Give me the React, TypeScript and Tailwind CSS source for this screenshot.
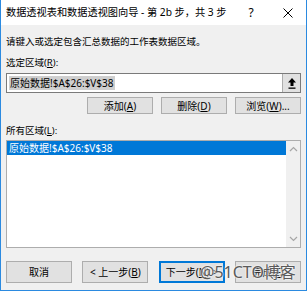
import type { ReactNode } from 'react'

const font = { fontFamily: '"Noto Sans", "Noto Sans CJK SC", sans-serif' }

function Btn({
  children,
  focused,
  className = '',
}: {
  children: ReactNode
  focused?: boolean
  className?: string
}) {
  return (
    <div
      className={`flex items-center justify-center bg-[#e1e1e1] text-[10px] text-black leading-none ${
        focused ? 'border-2 border-[#0078d7]' : 'border border-[#adadad]'
      } ${className}`}
    >
      {children}
    </div>
  )
}

function UploadIcon() {
  return (
    <svg width="8" height="11" viewBox="0 0 8 11">
      <path d="M4 0 L8 4.5 L5.5 4.5 L5.5 8 L2.5 8 L2.5 4.5 L0 4.5 Z" fill="#000" />
      <rect x="0.5" y="9.5" width="7" height="1.3" fill="#000" />
    </svg>
  )
}

function Chevron({ up }: { up?: boolean }) {
  return (
    <svg width="9" height="6" viewBox="0 0 9 6">
      <path
        d={up ? 'M1 5 L4.5 1.5 L8 5' : 'M1 1 L4.5 4.5 L8 1'}
        fill="none"
        stroke="#a6a6a6"
        strokeWidth="1.2"
      />
    </svg>
  )
}

export default function App() {
  return (
    <div
      style={font}
      className="relative w-[307px] h-[291px] bg-[#f0f0f0] border-l border-r border-b border-[#2b8ae0] flex flex-col text-black"
    >
      {/* title bar */}
      <div className="h-[25px] shrink-0 bg-white flex items-center pl-[5px] pr-[13px]">
        <span className="text-[10.2px] flex-1 whitespace-nowrap">
          数据透视表和数据透视图向导 - 第 2b 步，共 3 步
        </span>
        <span className="text-[12px] w-[14px] text-center mr-[25px]">?</span>
        <svg width="10" height="10" viewBox="0 0 10 10">
          <path d="M0.5 0.5 L9.5 9.5 M9.5 0.5 L0.5 9.5" stroke="#000" strokeWidth="1" />
        </svg>
      </div>

      <div className="flex flex-col px-[5px] text-[9.5px]">
        <div className="mt-[10px] leading-[14px] whitespace-nowrap">
          请键入或选定包含汇总数据的工作表数据区域。
        </div>
        <div className="mt-[7px] leading-[14px]">
          选定区域(<span className="underline">R</span>):
        </div>

        {/* range input */}
        <div className="mt-[3px] h-[20px] bg-white border border-[#7a7a7a] flex items-center pl-[2px]">
          <div className="flex-1 flex items-center">
            <span className="bg-[#cfcfcf] text-[10px] leading-[14px] px-[1px]">
              原始数据!$A$26:$V$38
            </span>
          </div>
          <div className="w-[18px] h-full bg-[#e1e1e1] border-l border-[#adadad] flex items-center justify-center">
            <UploadIcon />
          </div>
        </div>

        <div className="mt-[4px] flex justify-end gap-[8px]">
          <Btn className="w-[66px] h-[17px]">
            添加(<span className="underline">A</span>)
          </Btn>
          <Btn className="w-[66px] h-[17px]">
            删除(<span className="underline">D</span>)
          </Btn>
          <Btn className="w-[66px] h-[17px]">
            浏览(<span className="underline">W</span>)...
          </Btn>
        </div>

        <div className="mt-[10px] leading-[14px]">
          所有区域(<span className="underline">L</span>):
        </div>

        {/* list box */}
        <div className="mt-[2px] h-[108px] bg-white border border-[#adadad] flex">
          <div className="flex-1">
            <div className="h-[14px] bg-[#0078d7] text-white text-[10px] leading-[14px] pl-[2px]">
              原始数据!$A$26:$V$38
            </div>
          </div>
          <div className="w-[14px] bg-[#f0f0f0] flex flex-col items-center justify-between py-[5px]">
            <Chevron up />
            <Chevron />
          </div>
        </div>

        <div className="mt-[13px] flex justify-between">
          <Btn className="w-[66px] h-[22px]">取消</Btn>
          <Btn className="w-[66px] h-[22px]">
            &lt; 上一步(<span className="underline">B</span>)
          </Btn>
          <Btn focused className="w-[66px] h-[22px]">
            下一步(<span className="underline">N</span>) &gt;
          </Btn>
          <Btn className="w-[66px] h-[22px] text-[#e1e1e1]">
            完成(<span className="underline">F</span>)
          </Btn>
        </div>
      </div>

      {/* watermark */}
      <div
        className="absolute left-[199px] top-[262px] text-[16px] leading-[20px] text-[#5a5a5a] whitespace-nowrap"
        style={{ textShadow: '0 0 2px #fff, 0 0 2px #fff' }}
      >
        @51CTO博客
      </div>
    </div>
  )
}
